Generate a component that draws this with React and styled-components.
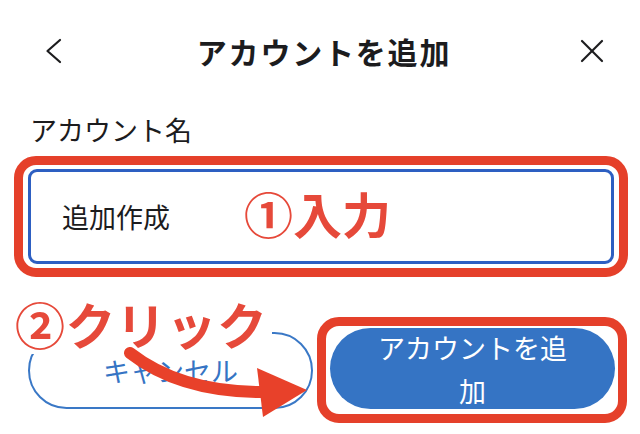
import React from 'react';
import styled, { createGlobalStyle } from 'styled-components';

const GlobalStyle = createGlobalStyle`
  html, body { margin: 0; padding: 0; background: #ffffff; }
  body {
    width: 640px;
    height: 434px;
    overflow: hidden;
    font-family: "Noto Sans CJK JP", "Noto Sans", sans-serif;
    color: #1c1c1e;
  }
  *, *::before, *::after { box-sizing: border-box; }
`;

const Screen = styled.div`
  display: flex;
  flex-direction: column;
  width: 640px;
  height: 434px;
`;

const Header = styled.header`
  display: grid;
  grid-template-columns: 1fr auto 1fr;
  align-items: center;
  height: 102px;
  padding: 0 36px 0 44px;
`;

const IconButton = styled.button`
  display: flex;
  align-items: center;
  justify-self: ${p => (p.$end ? 'end' : 'start')};
  background: none;
  border: 0;
  padding: 0;
  color: #1c1c1e;
`;

const Title = styled.h1`
  margin: 0;
  font-size: 30px;
  font-weight: 700;
  letter-spacing: 1.8px;
  line-height: 1;
`;

const Label = styled.label`
  display: block;
  margin-top: 10px;
  padding-left: 30px;
  font-size: 27px;
  line-height: 36px;
`;

const Highlight = styled.div`
  position: relative;
  display: flex;
  border: 9px solid #e5402a;
  border-radius: 22px;
  padding: ${p => p.$pad};
`;

const FieldHighlight = styled(Highlight)`
  margin: 8px 12px 0 14px;
`;

const TextInput = styled.input`
  width: 100%;
  height: 95px;
  border: 3px solid #2d5fc2;
  border-radius: 9px;
  padding: 0 0 0 31px;
  font-family: inherit;
  font-size: 27px;
  color: #1c1c1e;
  background: #fff;
  outline: none;
`;

const Callout = styled.span`
  position: absolute;
  left: ${p => p.$left}px;
  top: ${p => p.$top}px;
  color: #e6493a;
  font-size: ${p => p.$size}px;
  font-weight: 700;
  line-height: ${p => p.$lh || '1'};
  letter-spacing: ${p => p.$ls || '0'};
  white-space: nowrap;
  background: ${p => (p.$cover ? '#ffffff' : 'transparent')};
  padding: ${p => p.$pad || '0'};
  z-index: 2;
`;

const Actions = styled.div`
  position: relative;
  display: flex;
  align-items: center;
  margin-top: 40px;
  padding: 0 13px 0 28px;
`;

const CancelButton = styled.button`
  width: 285px;
  height: 77px;
  border: 2px solid #3a78c6;
  border-radius: 39px;
  background: #fff;
  color: #3574c4;
  font-family: inherit;
  font-size: 27px;
  padding: 0;
`;

const ButtonHighlight = styled(Highlight)`
  margin-left: 4px;
`;

const PrimaryButton = styled.button`
  display: flex;
  align-items: center;
  justify-content: center;
  width: 285px;
  height: 81px;
  border: 0;
  border-radius: 41px;
  background: #3574c4;
  color: #fff;
  font-family: inherit;
  font-size: 27px;
  line-height: 43px;
  padding: 0 40px;
  text-align: center;
`;

const ArrowLayer = styled.svg`
  position: absolute;
  left: 0;
  top: 0;
  overflow: visible;
  z-index: 3;
  pointer-events: none;
`;

export default function App() {
  return (
    <>
      <GlobalStyle />
      <Screen>
        <Header>
          <IconButton aria-label="戻る">
            <svg width="20" height="26" viewBox="0 0 20 26" fill="none" stroke="currentColor" strokeWidth="2.2" strokeLinecap="round" strokeLinejoin="round">
              <polyline points="16,2 3.5,13 16,24" />
            </svg>
          </IconButton>
          <Title>アカウントを追加</Title>
          <IconButton $end aria-label="閉じる">
            <svg width="24" height="24" viewBox="0 0 24 24" fill="none" stroke="currentColor" strokeWidth="2.2" strokeLinecap="round">
              <line x1="2" y1="2" x2="22" y2="22" />
              <line x1="22" y1="2" x2="2" y2="22" />
            </svg>
          </IconButton>
        </Header>

        <Label htmlFor="account-name">アカウント名</Label>
        <FieldHighlight $pad="4px 5px">
          <TextInput id="account-name" defaultValue="追加作成" readOnly />
          <Callout $left={221} $top={23} $size={49}>①入力</Callout>
        </FieldHighlight>

        <Actions>
          <CancelButton>キャンセル</CancelButton>
          <ButtonHighlight $pad="2px 3px 5px 4px">
            <PrimaryButton>
              <span>アカウントを追加</span>
            </PrimaryButton>
          </ButtonHighlight>
          <Callout $left={10} $top={-22} $size={50} $lh="56px" $ls="0.5px" $pad="0 4px 3px 5px" $cover>②クリック</Callout>
          <ArrowLayer width="320" height="117" viewBox="0 0 320 117">
            <path d="M130 36 Q180 75 262 75" fill="none" stroke="#e8412a" strokeWidth="12" strokeLinecap="round" />
            <polygon points="257,51 263,100 307,73" fill="#e8412a" />
          </ArrowLayer>
        </Actions>
      </Screen>
    </>
  );
}
